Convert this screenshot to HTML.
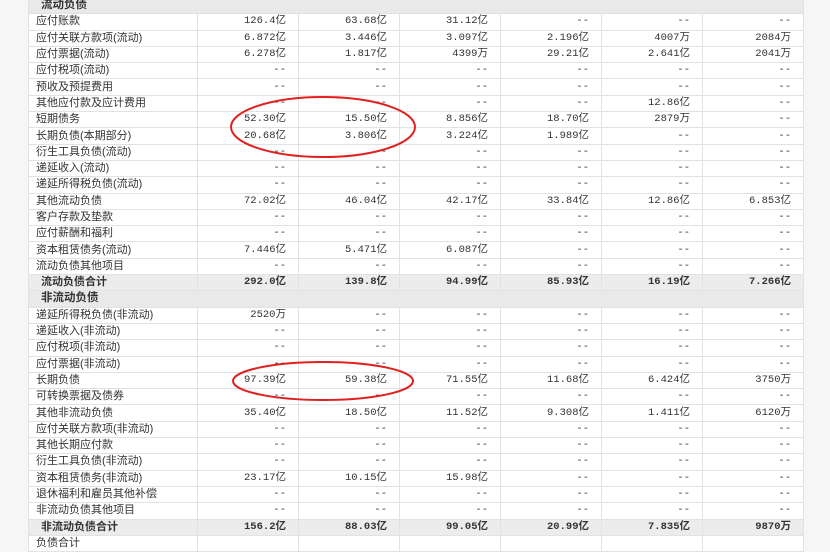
<!DOCTYPE html>
<html><head><meta charset="utf-8"><style>
body{margin:0;width:830px;height:540px;overflow:hidden;background:#f6f6f6;position:relative;font-family:"Liberation Sans","Noto Sans CJK SC",sans-serif;}
table{position:absolute;left:28px;top:-3px;border-collapse:collapse;table-layout:fixed;width:775px;background:#fff;font-size:11px;color:#333;}
td{height:15.3px;border:1px solid #e2e2e2;padding:0 12px 0 4px;text-align:right;white-space:nowrap;line-height:15px;overflow:hidden;font-family:"Liberation Mono","Noto Sans CJK SC",monospace;font-size:10.5px;}
td:first-child{text-align:left;font-family:"Liberation Sans","Noto Sans CJK SC",sans-serif;font-size:11px;padding-left:7px;}
tr.h td{background:#e9e9e9;font-weight:bold;font-size:11.5px;padding-left:12px;}
tr.t td{background:#ececec;font-weight:bold;}
tr.t td:first-child{padding-left:12px;}
</style></head><body>
<table>
<colgroup><col style="width:169px"><col style="width:101px"><col style="width:101px"><col style="width:101px"><col style="width:101px"><col style="width:101px"><col style="width:101px"></colgroup>
<tr class="h"><td colspan="7">流动负债</td></tr>
<tr><td>应付账款</td><td>126.4亿</td><td>63.68亿</td><td>31.12亿</td><td>--</td><td>--</td><td>--</td></tr>
<tr><td>应付关联方款项(流动)</td><td>6.872亿</td><td>3.446亿</td><td>3.097亿</td><td>2.196亿</td><td>4007万</td><td>2084万</td></tr>
<tr><td>应付票据(流动)</td><td>6.278亿</td><td>1.817亿</td><td>4399万</td><td>29.21亿</td><td>2.641亿</td><td>2041万</td></tr>
<tr><td>应付税项(流动)</td><td>--</td><td>--</td><td>--</td><td>--</td><td>--</td><td>--</td></tr>
<tr><td>预收及预提费用</td><td>--</td><td>--</td><td>--</td><td>--</td><td>--</td><td>--</td></tr>
<tr><td>其他应付款及应计费用</td><td>--</td><td>--</td><td>--</td><td>--</td><td>12.86亿</td><td>--</td></tr>
<tr><td>短期债务</td><td>52.30亿</td><td>15.50亿</td><td>8.856亿</td><td>18.70亿</td><td>2879万</td><td>--</td></tr>
<tr><td>长期负债(本期部分)</td><td>20.68亿</td><td>3.806亿</td><td>3.224亿</td><td>1.989亿</td><td>--</td><td>--</td></tr>
<tr><td>衍生工具负债(流动)</td><td>--</td><td>--</td><td>--</td><td>--</td><td>--</td><td>--</td></tr>
<tr><td>递延收入(流动)</td><td>--</td><td>--</td><td>--</td><td>--</td><td>--</td><td>--</td></tr>
<tr><td>递延所得税负债(流动)</td><td>--</td><td>--</td><td>--</td><td>--</td><td>--</td><td>--</td></tr>
<tr><td>其他流动负债</td><td>72.02亿</td><td>46.04亿</td><td>42.17亿</td><td>33.84亿</td><td>12.86亿</td><td>6.853亿</td></tr>
<tr><td>客户存款及垫款</td><td>--</td><td>--</td><td>--</td><td>--</td><td>--</td><td>--</td></tr>
<tr><td>应付薪酬和福利</td><td>--</td><td>--</td><td>--</td><td>--</td><td>--</td><td>--</td></tr>
<tr><td>资本租赁债务(流动)</td><td>7.446亿</td><td>5.471亿</td><td>6.087亿</td><td>--</td><td>--</td><td>--</td></tr>
<tr><td>流动负债其他项目</td><td>--</td><td>--</td><td>--</td><td>--</td><td>--</td><td>--</td></tr>
<tr class="t"><td>流动负债合计</td><td>292.0亿</td><td>139.8亿</td><td>94.99亿</td><td>85.93亿</td><td>16.19亿</td><td>7.266亿</td></tr>
<tr class="h"><td colspan="7">非流动负债</td></tr>
<tr><td>递延所得税负债(非流动)</td><td>2520万</td><td>--</td><td>--</td><td>--</td><td>--</td><td>--</td></tr>
<tr><td>递延收入(非流动)</td><td>--</td><td>--</td><td>--</td><td>--</td><td>--</td><td>--</td></tr>
<tr><td>应付税项(非流动)</td><td>--</td><td>--</td><td>--</td><td>--</td><td>--</td><td>--</td></tr>
<tr><td>应付票据(非流动)</td><td>--</td><td>--</td><td>--</td><td>--</td><td>--</td><td>--</td></tr>
<tr><td>长期负债</td><td>97.39亿</td><td>59.38亿</td><td>71.55亿</td><td>11.68亿</td><td>6.424亿</td><td>3750万</td></tr>
<tr><td>可转换票据及债券</td><td>--</td><td>--</td><td>--</td><td>--</td><td>--</td><td>--</td></tr>
<tr><td>其他非流动负债</td><td>35.40亿</td><td>18.50亿</td><td>11.52亿</td><td>9.308亿</td><td>1.411亿</td><td>6120万</td></tr>
<tr><td>应付关联方款项(非流动)</td><td>--</td><td>--</td><td>--</td><td>--</td><td>--</td><td>--</td></tr>
<tr><td>其他长期应付款</td><td>--</td><td>--</td><td>--</td><td>--</td><td>--</td><td>--</td></tr>
<tr><td>衍生工具负债(非流动)</td><td>--</td><td>--</td><td>--</td><td>--</td><td>--</td><td>--</td></tr>
<tr><td>资本租赁债务(非流动)</td><td>23.17亿</td><td>10.15亿</td><td>15.98亿</td><td>--</td><td>--</td><td>--</td></tr>
<tr><td>退休福利和雇员其他补偿</td><td>--</td><td>--</td><td>--</td><td>--</td><td>--</td><td>--</td></tr>
<tr><td>非流动负债其他项目</td><td>--</td><td>--</td><td>--</td><td>--</td><td>--</td><td>--</td></tr>
<tr class="t"><td>非流动负债合计</td><td>156.2亿</td><td>88.03亿</td><td>99.05亿</td><td>20.99亿</td><td>7.835亿</td><td>9870万</td></tr>
<tr><td>负债合计</td><td></td><td></td><td></td><td></td><td></td><td></td></tr>
</table>
<svg width="830" height="540" style="position:absolute;left:0;top:0">
<ellipse cx="323" cy="127" rx="92" ry="30" fill="none" stroke="#e02020" stroke-width="2"/>
<ellipse cx="323" cy="381" rx="90" ry="19" fill="none" stroke="#e02020" stroke-width="2"/>
</svg>
</body></html>
